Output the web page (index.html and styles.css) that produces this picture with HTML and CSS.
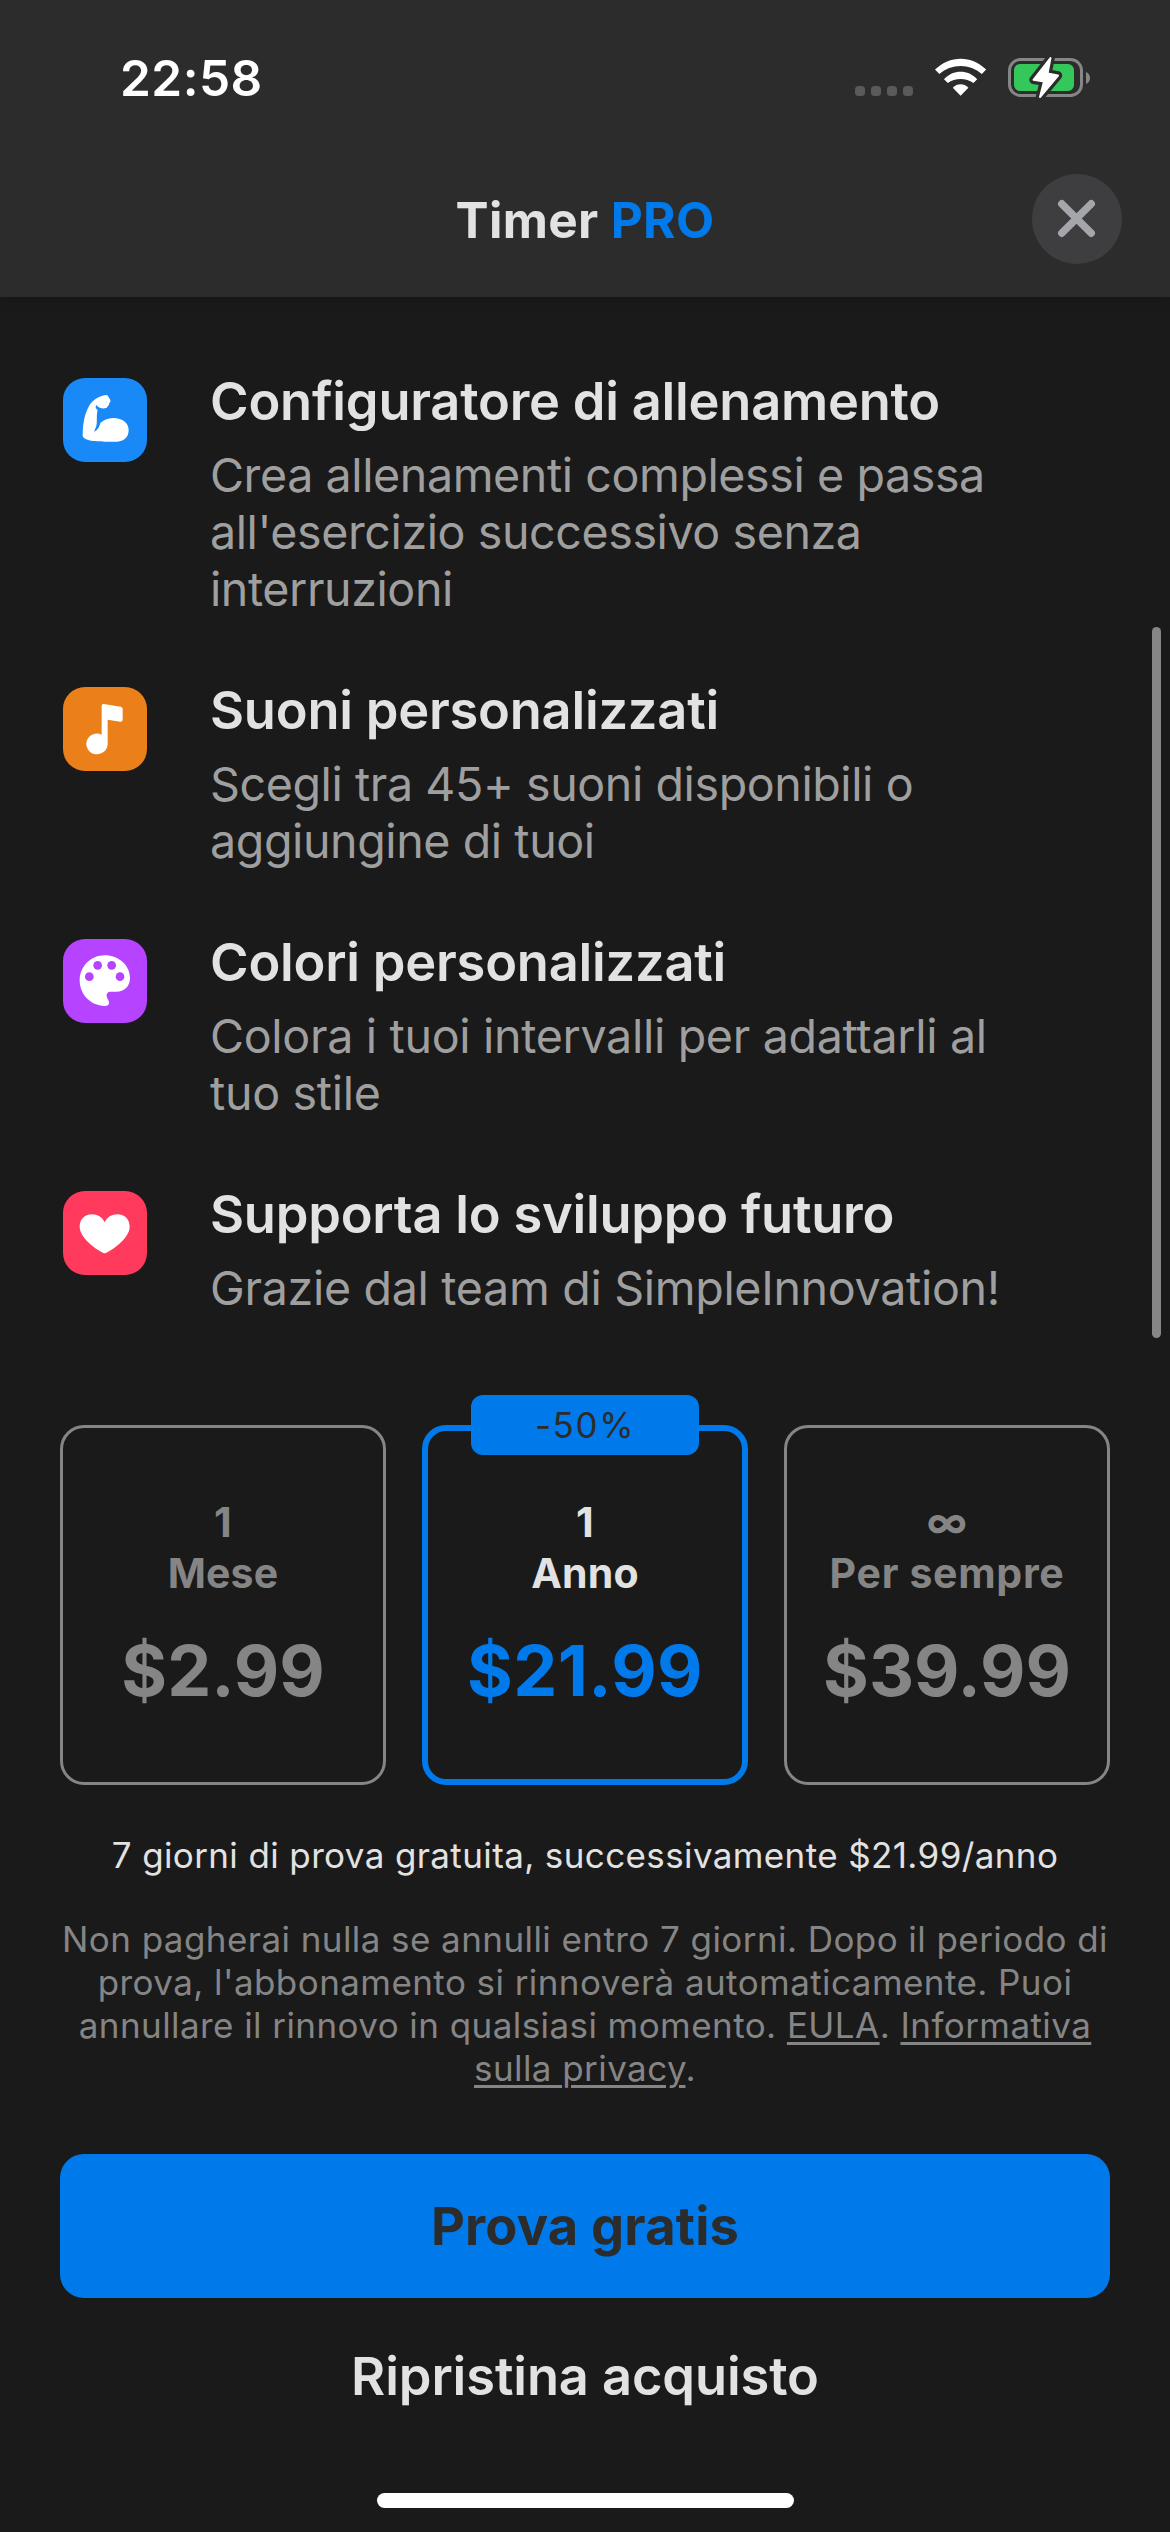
FILE: index.html
```html
<!DOCTYPE html>
<html lang="it">
<head>
<meta charset="utf-8">
<title>Timer PRO</title>
<link rel="stylesheet" href="styles.css">
</head>
<body>
<div class="screen">
  <header class="header">
    <div class="status">
      <span class="clock">22:58</span>
      <div class="status-icons">
        <div class="signal"><i></i><i></i><i></i><i></i></div>
        <svg class="wifi" viewBox="0 0 52 38" fill="#fff">
          <path d="M0 11.6C14.5-3 37-3 51.2 11.6L46.8 16C35 5.3 16.2 5.3 4.4 16Z"/>
          <path d="M9 21.2C18 11.3 33.2 11.3 42.2 21.2L38.4 25C31 19.7 20.2 19.7 12.8 25Z"/>
          <path d="M17.8 29.8C22.2 25.2 29 25.2 33.4 29.8L25.6 37.8Z"/>
        </svg>
        <svg class="battery" viewBox="0 0 83 39">
          <rect x="1.5" y="1.5" width="72" height="36" rx="11" fill="none" stroke="#868686" stroke-width="3"/>
          <rect x="6" y="6" width="60" height="27" rx="6" fill="#34c759"/>
          <path d="M78 14C80.500 15 82 17 82 20S80.500 25 78 26Z" fill="#868686"/>
          <path d="M42.500 0L25.500 21.800L36 23.500L32 39L50 17.500L39.500 15.500Z" fill="#2c2c2c" stroke="#2c2c2c" stroke-width="8.500" stroke-linejoin="round"/>
          <path d="M42.500 0L25.500 21.800L36 23.500L32 39L50 17.500L39.500 15.500Z" fill="#fff" stroke="#fff" stroke-width="2" stroke-linejoin="round"/>
        </svg>
      </div>
    </div>
    <div class="nav">
      <h1 class="title">Timer <span>PRO</span></h1>
      <button class="close" aria-label="Chiudi">
        <svg viewBox="0 0 90 90" fill="none" stroke="#a5a5ac" stroke-width="7.500" stroke-linecap="round"><path d="M29.800 29.800L59.200 59.200M59.200 29.800L29.800 59.200"/></svg>
      </button>
    </div>
  </header>

  <main class="content">
    <ul class="features">
      <li class="feature">
        <svg class="tile blue" viewBox="0 0 252 252"><path d="M125 52Q132 50 135 54L142 66Q144 72 139 75Q139 82 134 85Q133 91 126 91C114 92 104 87 99 80L98 90L104 97C99 112 104 134 99 147L93 161C102 158 109 148 112 135C122 126 134 121 150 120C180 120 197 136 197 156C197 178 182 191 160 191H125C95 191 59 188 59 172C59 140 64 110 77 86C88 66 105 56 125 52Z"/></svg>
        <div><h2>Configuratore di allenamento</h2>
        <p>Crea allenamenti complessi e passa<br>all'esercizio successivo senza<br>interruzioni</p></div>
      </li>
      <li class="feature">
        <svg class="tile orange" viewBox="0 0 252 252"><path d="M116 56Q116 50 122 51L173 59Q179 60 179 66V98Q179 105 172 104L134 98V171A32 31 0 1 1 116 143Z"/></svg>
        <div><h2>Suoni personalizzati</h2>
        <p>Scegli tra 45+ suoni disponibili o<br>aggiungine di tuoi</p></div>
      </li>
      <li class="feature">
        <svg class="tile purple" viewBox="0 0 252 252"><path d="M125 49C168 49 201 80 201 117C201 142 184 158 160 158H144C134 158 130 164 131 172C132 180 138 183 138 191C138 197 134 201 125 201C82 200 50 166 50 124C50 82 84 49 125 49Z"/><g fill="#b543ff"><circle cx="104" cy="79" r="13"/><circle cx="146" cy="79" r="13"/><circle cx="79" cy="113" r="13"/><circle cx="171" cy="113" r="13"/></g></svg>
        <div><h2>Colori personalizzati</h2>
        <p class="loose">Colora i tuoi intervalli per adattarli al<br>tuo stile</p></div>
      </li>
      <li class="feature">
        <svg class="tile red" viewBox="0 0 252 252"><path d="M125 187C118 187 50 146 50 107C50 85 65 70 86 70C104 70 118 78 125 94C132 78 146 70 164 70C185 70 200 85 200 107C200 146 132 187 125 187Z"/></svg>
        <div><h2>Supporta lo sviluppo futuro</h2>
        <p class="loose">Grazie dal team di SimpleInnovation!</p></div>
      </li>
    </ul>

    <div class="plans">
      <div class="plan"><span class="term">1</span><span class="term">Mese</span><span class="price">$2.99</span></div>
      <div class="plan selected"><span class="badge">-50%</span><span class="term">1</span><span class="term">Anno</span><span class="price">$21.99</span></div>
      <div class="plan"><span class="term">∞</span><span class="term wide">Per sempre</span><span class="price">$39.99</span></div>
    </div>

    <p class="trial">7 giorni di prova gratuita, successivamente $21.99/anno</p>
    <p class="legal">Non pagherai nulla se annulli entro 7 giorni. Dopo il periodo di<br>prova, l'abbonamento si rinnoverà automaticamente. Puoi<br>annullare il rinnovo in qualsiasi momento. <a>EULA</a>. <a>Informativa<br>sulla privacy</a>.</p>
    <button class="primary">Prova gratis</button>
    <button class="restore">Ripristina acquisto</button>
    <div class="home-indicator"></div>
  </main>
  <div class="scrollbar"></div>
</div>
</body>
</html>
```
FILE: styles.css
```css
* { box-sizing: border-box; margin: 0; padding: 0; }

body {
  background: #191919;
  color: #e2e2e2;
  font-family: Inter, "Liberation Sans", sans-serif;
}

button { border: 0; background: none; font: inherit; color: inherit; }

.screen {
  position: relative;
  width: 1170px;
  height: 2532px;
  overflow: hidden;
  background: #1a1a1a;
}

.header {
  height: 297px;
  background: #2c2c2c;
  box-shadow: 0 2px 12px rgba(0, 0, 0, .16);
}

.status {
  display: flex;
  justify-content: space-between;
  height: 156px;
  padding: 48px 79px 0 120px;
}
.clock {
  color: #fff;
  font-size: 49.5px;
  font-weight: 600;
  line-height: 60px;
  letter-spacing: .5px;
}
.status-icons { display: flex; padding-top: 10px; }
.signal { display: flex; gap: 6px; margin: 28px 22px 0 0; }
.signal i { width: 10px; height: 10px; border-radius: 3.5px; background: #5a5a5a; }
.wifi { width: 52px; height: 38px; margin-right: 21px; }
.battery { width: 83px; height: 39px; overflow: visible; }

.nav {
  display: grid;
  grid-template-columns: 90px 1fr 90px;
  padding: 18px 48px 0;
}
.title {
  grid-column: 2;
  padding-top: 16px;
  font-size: 49.5px;
  font-weight: 700;
  line-height: 60px;
  letter-spacing: .36px;
  text-align: center;
}
.title span { color: #007aeb; }
.close { width: 90px; height: 90px; border-radius: 50%; background: #3e3e40; }
.close svg { display: block; width: 90px; height: 90px; }

.content {
  display: flex;
  flex-direction: column;
  padding: 74px 60px 0;
}

.features { display: flex; flex-direction: column; gap: 62px; list-style: none; }
.feature {
  display: grid;
  grid-template-columns: 84px 1fr;
  column-gap: 63px;
  padding-left: 3px;
}
.tile { width: 84px; height: 84px; margin-top: 7px; border-radius: 22px; fill: #fff; }
.blue { background: #1889f7; }
.orange { background: #eb7f1a; }
.purple { background: #b543ff; }
.red { background: #ff3a5d; }
.feature h2 {
  margin-bottom: 16px;
  font-size: 52.4px;
  font-weight: 600;
  line-height: 60px;
  letter-spacing: -.22px;
}
.feature p {
  color: #9f9f9f;
  font-size: 46.6px;
  line-height: 57px;
  letter-spacing: -.42px;
  white-space: nowrap;
}
.feature p.loose { letter-spacing: -.32px; }

.plans {
  display: grid;
  grid-template-columns: repeat(3, 1fr);
  gap: 36px;
  margin-top: 108px;
}
.plan {
  position: relative;
  display: flex;
  flex-direction: column;
  align-items: center;
  height: 360px;
  padding-top: 69px;
  border: 3px solid #858585;
  border-radius: 24px;
  color: #858585;
}
.plan.selected { padding-top: 66px; border: 6px solid #007aeb; color: #e2e2e2; }
.term { font-size: 41px; font-weight: 700; line-height: 51px; letter-spacing: .15px; }
.term.wide { letter-spacing: .7px; }
.price { margin-top: 30px; font-size: 70px; font-weight: 700; line-height: 84px; }
.selected .price { color: #007aeb; letter-spacing: .4px; }
.badge {
  position: absolute;
  top: -36px;
  left: 43px;
  width: 228px;
  height: 60px;
  border-radius: 12px;
  background: #007aeb;
  color: #2c2c2c;
  font-size: 35px;
  line-height: 60px;
  letter-spacing: 1.6px;
  text-align: center;
}

.trial {
  margin-top: 49px;
  font-size: 35px;
  line-height: 42px;
  letter-spacing: .38px;
  text-align: center;
}
.legal {
  margin-top: 42px;
  color: #858585;
  font-size: 35px;
  line-height: 43px;
  letter-spacing: .43px;
  text-align: center;
  white-space: nowrap;
}
.legal a {
  text-decoration: underline;
  text-decoration-thickness: 3px;
  text-underline-offset: 4px;
}

.primary {
  height: 144px;
  margin-top: 64px;
  border-radius: 24px;
  background: #007aeb;
  color: #2c2c2c;
  font-size: 52.4px;
  font-weight: 700;
  letter-spacing: .2px;
}
.restore {
  align-self: center;
  margin-top: 48px;
  font-size: 52.4px;
  font-weight: 600;
  line-height: 60px;
  letter-spacing: -.1px;
}
.home-indicator {
  align-self: center;
  width: 417px;
  height: 15px;
  margin-top: 87px;
  border-radius: 8px;
  background: #fff;
}

.scrollbar {
  position: absolute;
  top: 627px;
  right: 9px;
  width: 9px;
  height: 711px;
  border-radius: 5px;
  background: #868686;
}
```
